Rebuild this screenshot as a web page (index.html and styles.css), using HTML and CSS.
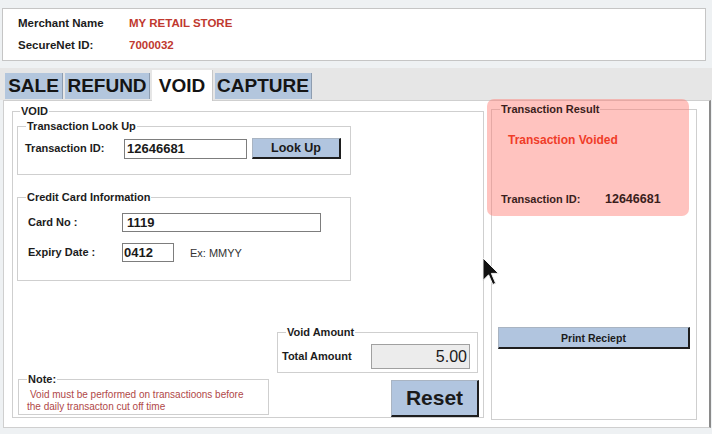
FILE: index.html
```html
<!DOCTYPE html>
<html>
<head>
<meta charset="utf-8">
<title>SecureNet - Void</title>
<link rel="stylesheet" href="styles.css">
</head>
<body>
<div class="app">
  <div class="header">
    <div class="hrow"><span class="hlabel">Merchant Name</span><span class="hvalue">MY RETAIL STORE</span></div>
    <div class="hrow"><span class="hlabel">SecureNet ID:</span><span class="hvalue">7000032</span></div>
  </div>

  <div class="tabstrip">
    <div class="tab t-sale">SALE</div>
    <div class="tab t-refund">REFUND</div>
    <div class="tab t-void active">VOID</div>
    <div class="tab t-capture">CAPTURE</div>
  </div>

  <div class="main">
    <fieldset class="group void">
      <legend class="lg-void">VOID</legend>
      <div class="void-body">
        <fieldset class="group lookup">
          <legend class="lg-lookup">Transaction Look Up</legend>
          <div class="row">
            <span class="label l-txn">Transaction ID:</span>
            <div class="input txn">12646681</div>
            <button class="btn lookup-btn">Look Up</button>
          </div>
        </fieldset>

        <fieldset class="group card">
          <legend class="lg-card">Credit Card Information</legend>
          <div class="row">
            <span class="label l-card">Card No :</span>
            <div class="input cardno">1119</div>
          </div>
          <div class="row row-exp">
            <span class="label l-card">Expiry Date :</span>
            <div class="input expiry">0412</div>
            <span class="hint">Ex: MMYY</span>
          </div>
        </fieldset>

        <div class="bottom">
          <fieldset class="group note">
            <legend class="lg-note">Note:</legend>
            <p class="note-text"><span class="first">Void must be performed on transactioons before</span><br>the daily transacton cut off time</p>
          </fieldset>
          <div class="amount-col">
            <fieldset class="group amount">
              <legend class="lg-amount">Void Amount</legend>
              <div class="row">
                <span class="label l-amt">Total Amount</span>
                <div class="input amt">5.00</div>
              </div>
            </fieldset>
            <button class="btn reset">Reset</button>
          </div>
        </div>
      </div>
    </fieldset>

    <div class="right">
      <fieldset class="group result">
        <legend class="lg-result">Transaction Result</legend>
        <div class="result-body">
          <div class="status">Transaction Voided</div>
          <div class="idrow"><span class="l-rid">Transaction ID:</span><span class="rid">12646681</span></div>
          <button class="btn print">Print Reciept</button>
        </div>
      </fieldset>
      <div class="highlight"></div>
    </div>
  </div>

  <svg class="cursor" width="18" height="30" viewBox="0 0 18 30">
    <path d="M1 1 L1 23.4 L6.6 17.8 L10.8 27.6 L13.6 26.2 L9.4 16.4 L16.4 16.4 Z" fill="#111" stroke="#f2f2f2" stroke-width="1" stroke-linejoin="round"/>
  </svg>
</div>
</body>
</html>
```
FILE: styles.css
```css
* { box-sizing: border-box; }
html, body { margin: 0; padding: 0; }
body {
  width: 712px;
  height: 434px;
  overflow: hidden;
  background: #eef1f3;
  font-family: "Liberation Sans", Arial, sans-serif;
  color: #1c1c1c;
}
.app { position: relative; padding-top: 8px; }

/* header */
.header {
  margin: 0 6px 0 2px;
  height: 53px;
  border: 1px solid #c5c5c5;
  background: #fff;
  padding: 8px 0 0 15px;
}
.hrow {
  display: flex;
  height: 13px;
  line-height: 13px;
  font-size: 11.5px;
  font-weight: bold;
}
.hrow + .hrow { margin-top: 9px; }
.hlabel { width: 111px; color: #1c1c1c; }
.hvalue { color: #c0392f; }

/* tabs */
.tabstrip {
  margin-top: 7px;
  height: 32px;
  background: #e6e6e6;
  display: flex;
  align-items: flex-end;
  padding-left: 5px;
  gap: 2px;
}
.tab {
  height: 26px;
  margin-bottom: 1px;
  background: #b3c6dd;
  border-right: 1px solid #8e9db0;
  font-size: 19px;
  font-weight: bold;
  line-height: 26px;
  text-align: center;
  color: #141414;
}
.t-sale { width: 58px; }
.t-refund { width: 85px; }
.t-void { width: 61px; }
.t-capture { width: 97px; }
.tab.active {
  height: 31px;
  margin-bottom: -1px;
  line-height: 31px;
  background: #fff;
  border-right: 1px solid #c8c8c8;
  position: relative;
  z-index: 1;
}

/* main panel */
.main {
  height: 328px;
  margin: 0 1px 0 3px;
  border: 1px solid #cfcfcf;
  border-right: 2px solid #8a8a8a;
  background: #fff;
  display: flex;
  align-items: flex-start;
  gap: 7px;
  padding: 0 12px 0 8px;
}

fieldset.group {
  margin: 0;
  padding: 0;
  border: 1px solid #cfcfcf;
  min-width: 0;
}
legend {
  padding: 0 1px;
  margin-left: 8px;
  font-size: 11px;
  font-weight: bold;
  line-height: 13px;
  color: #1c1c1c;
}
legend.lg-void { margin-left: 7px; }
legend.lg-lookup { margin-left: 1px; }
legend.lg-card { margin-left: -2px; }
legend.lg-note { margin-left: 0; }
legend.lg-amount { margin-left: 4px; }

.void { width: 472px; margin-top: 4px !important; }
.void-body {
  height: 299px;
  display: flex;
  flex-direction: column;
  padding-left: 4px;
}

.row { display: flex; align-items: center; }
.label {
  font-size: 11px;
  font-weight: bold;
  line-height: 13px;
  white-space: nowrap;
}
.input {
  height: 20px;
  border: 1px solid #7d7d7d;
  background: #fff;
  font-size: 13px;
  font-weight: bold;
  line-height: 18px;
  color: #1a1a1a;
}
.btn {
  padding: 0;
  margin: 0;
  background: #b1c5df;
  border: 1px solid #a9b4c2;
  border-right: 2px solid #1e1e1e;
  border-bottom: 2px solid #1e1e1e;
  font-family: "Liberation Sans", Arial, sans-serif;
  font-weight: bold;
  color: #1a1a1a;
}

/* look up */
.lookup {
  width: 334px;
  margin-top: 2px !important;
  padding: 5px 0 15px 7px !important;
}
.lookup .row { height: 21px; }
.l-txn { width: 99px; }
.txn { width: 123px; padding-left: 2px; }
.lookup-btn {
  width: 89px;
  height: 21px;
  margin-left: 5px;
  font-size: 12.5px;
}

/* credit card */
.card {
  width: 334px;
  margin-top: 16px !important;
  padding: 9px 0 18px 10px !important;
}
.card .row { height: 19px; }
.card .row-exp { margin-top: 11px; }
.l-card { width: 94px; }
.cardno { width: 199px; height: 19px; padding-left: 4px; line-height: 17px; }
.expiry { width: 52px; height: 19px; padding-left: 1px; line-height: 17px; }
.hint {
  margin-left: 16px;
  font-size: 11px;
  color: #333;
}

/* bottom area */
.bottom {
  margin-top: auto;
  display: flex;
  align-items: flex-end;
}
.note {
  width: 251px;
  margin: 0 0 2px 1px !important;
  padding: 3px 4px 1px 8px !important;
}
.note-text {
  margin: 0;
  font-size: 10px;
  line-height: 12px;
  color: #b04848;
  white-space: nowrap;
}
.note-text .first { padding-left: 3px; }

.amount-col {
  margin-left: 8px;
  width: 202px;
  display: flex;
  flex-direction: column;
  align-items: flex-end;
}
.amount {
  width: 201px;
  margin: 0 1px 0 0 !important;
  padding: 5px 7px 3px 4px !important;
}
.l-amt { width: 89px; }
.amt {
  width: 99px;
  height: 25px;
  background: #ececec;
  border-color: #a0a0a0;
  text-align: right;
  padding-right: 2px;
  font-size: 16px;
  font-weight: normal;
  line-height: 23px;
}
.reset {
  width: 88px;
  height: 37px;
  margin-top: 7px;
  font-size: 21px;
}

/* right column */
.right {
  position: relative;
  width: 206px;
}
.result {
  width: 206px;
  margin-top: 2px !important;
}
.lg-result { position: relative; z-index: 2; color: #3a1e1c; }
.result-body {
  height: 303px;
  display: flex;
  flex-direction: column;
  align-items: flex-start;
}
.status {
  position: relative;
  z-index: 2;
  margin: 17px 0 0 16px;
  font-size: 12px;
  font-weight: bold;
  line-height: 14px;
  color: #f03c28;
}
.idrow {
  position: relative;
  z-index: 2;
  margin: 46px 0 0 9px;
  display: flex;
  align-items: center;
  font-weight: bold;
  line-height: 13px;
  color: #3a1e1c;
}
.l-rid { width: 104px; font-size: 11px; }
.rid { font-size: 12.5px; }
.print {
  margin: 121px 0 0 6px;
  width: 192px;
  height: 22px;
  font-size: 10.5px;
}
.highlight {
  position: absolute;
  left: -4px;
  top: -2px;
  width: 202px;
  height: 117px;
  border-radius: 7px;
  background: rgba(255, 128, 118, 0.47);
  z-index: 1;
}

.cursor {
  position: absolute;
  left: 482px;
  top: 257px;
  z-index: 5;
}
```
